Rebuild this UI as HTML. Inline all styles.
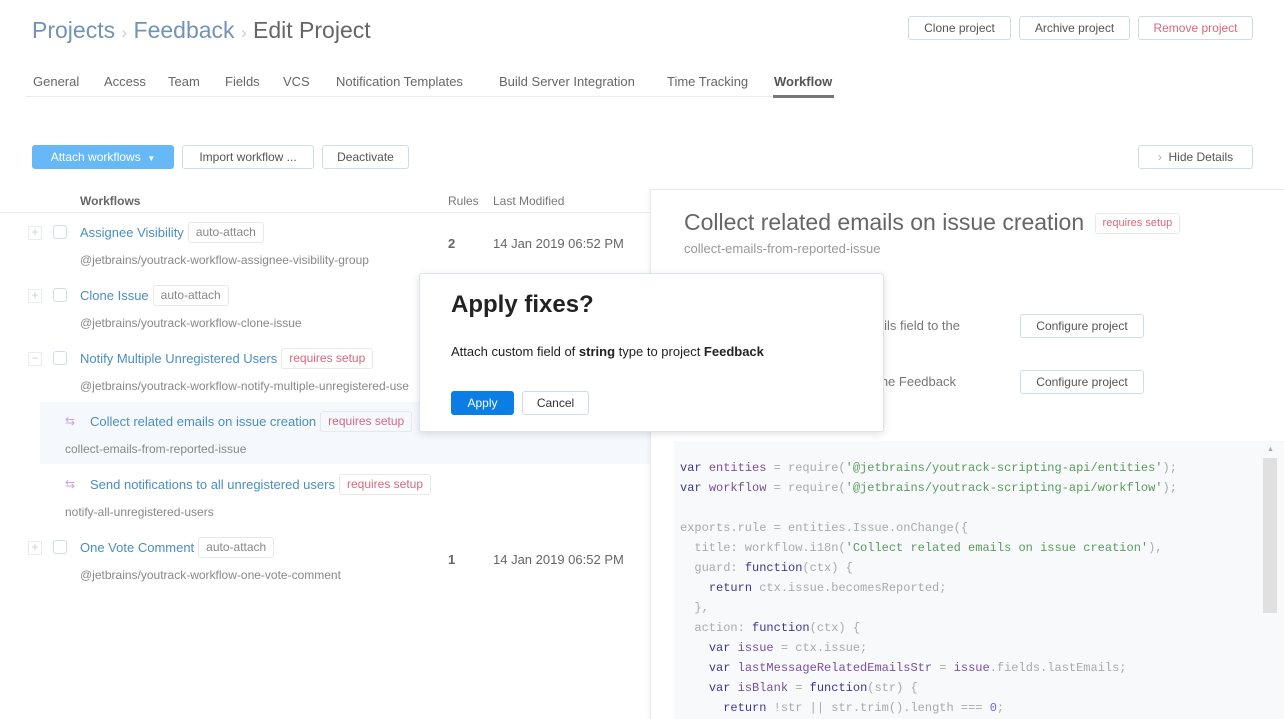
<!DOCTYPE html>
<html><head><meta charset="utf-8"><style>
*{box-sizing:border-box;margin:0;padding:0}
body{width:1284px;height:719px;overflow:hidden;background:#fff;font-family:"Liberation Sans","DejaVu Sans",sans-serif;font-size:13px;color:#444;position:relative}
.a{position:absolute;white-space:nowrap}
.btn{position:absolute;border:1px solid #cfdbe6;border-radius:3px;background:#fff;height:24px;line-height:22px;text-align:center;font-size:12px;color:#555}
.tag{display:inline-block;border:1px solid #e6e8ea;border-radius:3px;padding:0 7px;height:21px;line-height:19px;font-size:12px;color:#888;margin-left:4px;vertical-align:middle}
.tag.r{color:#d7687d}
.lnk{color:#4a8ec3;font-size:13px;vertical-align:middle}
.sub{color:#888;font-size:12px}
.cb{position:absolute;width:14px;height:14px;border:1px solid #cfdbe6;border-radius:3px;background:#fff}
.pl{position:absolute;width:14px;height:14px;border:1px solid #e8ecf0;color:#ccd;font-size:12px;line-height:11px;text-align:center}
.code{font-family:"Liberation Mono","DejaVu Sans Mono",monospace;font-size:12px;line-height:20px;color:#aaa}
.k{color:#3a3a8a}.v{color:#7a4f9c}.s{color:#5a9a5e}
</style></head><body>
<div class="a" style="left:32px;top:17px;font-size:23px;color:#7392b4">Projects <span style="color:#ccc;font-size:17px">›</span> Feedback <span style="color:#ccc;font-size:17px">›</span> <span style="color:#666">Edit Project</span></div>
<div class="btn" style="left:908px;top:16px;width:103px">Clone project</div>
<div class="btn" style="left:1019px;top:16px;width:111px">Archive project</div>
<div class="btn" style="left:1138px;top:16px;width:115px;color:#d7687d">Remove project</div>
<div class="a" style="left:33px;top:74px;font-size:13px;color:#666">
<span style="position:absolute;left:0">General</span><span style="position:absolute;left:71px">Access</span><span style="position:absolute;left:135px">Team</span><span style="position:absolute;left:192px">Fields</span><span style="position:absolute;left:250px">VCS</span><span style="position:absolute;left:303px">Notification Templates</span><span style="position:absolute;left:466px">Build Server Integration</span><span style="position:absolute;left:634px">Time Tracking</span><span style="position:absolute;left:741px;font-weight:bold;color:#555">Workflow</span></div>
<div class="a" style="left:26px;top:96px;width:808px;height:1px;background:#e6ebf0"></div>
<div class="a" style="left:773px;top:95px;width:61px;height:3px;background:#777"></div>
<div class="btn" style="left:32px;top:145px;width:142px;background:#66b8f7;border-color:#66b8f7;color:#fff">Attach workflows &nbsp;<span style="font-size:8px">▼</span></div>
<div class="btn" style="left:182px;top:145px;width:132px">Import workflow ...</div>
<div class="btn" style="left:322px;top:145px;width:87px">Deactivate</div>
<div class="btn" style="left:1138px;top:145px;width:115px"><span style="color:#aaa">›</span>&nbsp; Hide Details</div>
<div class="a" style="left:80px;top:194px;font-size:12px;font-weight:bold;color:#666">Workflows</div>
<div class="a" style="left:448px;top:194px;font-size:12px;color:#777">Rules</div>
<div class="a" style="left:493px;top:194px;font-size:12px;color:#777">Last Modified</div>
<div class="a" style="left:0;top:212px;width:650px;height:1px;background:#e6ebf0"></div>
<div class="a" style="left:40px;top:402px;width:610px;height:62px;background:#f5f8fc"></div>

<div class="pl" style="left:28px;top:226px">+</div><div class="cb" style="left:53px;top:225px"></div>
<div class="a" style="left:80px;top:222px"><span class="lnk">Assignee Visibility</span><span class="tag">auto-attach</span></div>
<div class="a sub" style="left:80px;top:253px">@jetbrains/youtrack-workflow-assignee-visibility-group</div>
<div class="a" style="left:448px;top:236px;font-weight:bold;color:#666">2</div>
<div class="a" style="left:493px;top:236px;color:#666">14 Jan 2019 06:52 PM</div>

<div class="pl" style="left:28px;top:289px">+</div><div class="cb" style="left:53px;top:288px"></div>
<div class="a" style="left:80px;top:285px"><span class="lnk">Clone Issue</span><span class="tag">auto-attach</span></div>
<div class="a sub" style="left:80px;top:316px">@jetbrains/youtrack-workflow-clone-issue</div>

<div class="pl" style="left:28px;top:352px">−</div><div class="cb" style="left:53px;top:351px"></div>
<div class="a" style="left:80px;top:348px"><span class="lnk">Notify Multiple Unregistered Users</span><span class="tag r">requires setup</span></div>
<div class="a sub" style="left:80px;top:379px">@jetbrains/youtrack-workflow-notify-multiple-unregistered-use</div>

<div class="a" style="left:65px;top:414px;color:#c9a4e6;font-size:12px">⇆</div>
<div class="a" style="left:90px;top:411px"><span class="lnk">Collect related emails on issue creation</span><span class="tag r">requires setup</span></div>
<div class="a sub" style="left:65px;top:442px">collect-emails-from-reported-issue</div>
<div class="a" style="left:65px;top:477px;color:#c9a4e6;font-size:12px">⇆</div>
<div class="a" style="left:90px;top:474px"><span class="lnk">Send notifications to all unregistered users</span><span class="tag r">requires setup</span></div>
<div class="a sub" style="left:65px;top:505px">notify-all-unregistered-users</div>

<div class="pl" style="left:28px;top:541px">+</div><div class="cb" style="left:53px;top:540px"></div>
<div class="a" style="left:80px;top:537px"><span class="lnk">One Vote Comment</span><span class="tag">auto-attach</span></div>
<div class="a sub" style="left:80px;top:568px">@jetbrains/youtrack-workflow-one-vote-comment</div>
<div class="a" style="left:448px;top:552px;font-weight:bold;color:#666">1</div>
<div class="a" style="left:493px;top:552px;color:#666">14 Jan 2019 06:52 PM</div>

<div class="a" style="left:650px;top:189px;width:634px;height:530px;border-left:1px solid #e6ebf0;border-top:1px solid #e6ebf0;box-shadow:-2px 0 4px rgba(0,0,0,.04)"></div>
<div class="a" style="left:684px;top:209px;font-size:23px;color:#666">Collect related emails on issue creation <span class="tag r" style="font-size:11px">requires setup</span></div>
<div class="a sub" style="left:684px;top:241px;font-size:13px;color:#999">collect-emails-from-reported-issue</div>
<div class="a" style="left:660px;top:318px;width:300px;text-align:right;color:#777">Add the lastEmails field to the</div>
<div class="a" style="left:660px;top:374px;width:296px;text-align:right;color:#777">Attach to the Feedback</div>
<div class="btn" style="left:1020px;top:314px;width:124px">Configure project</div>
<div class="btn" style="left:1020px;top:370px;width:124px">Configure project</div>

<div class="a" style="left:674px;top:441px;width:610px;height:278px;background:#f8f9fb"></div>
<div class="a" style="left:1263px;top:458px;width:14px;height:155px;background:#e0e0e0"></div>
<div class="a" style="left:1267px;top:446px;font-size:7px;color:#aaa">▲</div>
<div class="a code" style="left:680px;top:458px"><span class="k">var</span> <span class="v">entities</span> = require(<span class="s">'@jetbrains/youtrack-scripting-api/entities'</span>);<br><span class="k">var</span> <span class="v">workflow</span> = require(<span class="s">'@jetbrains/youtrack-scripting-api/workflow'</span>);<br><br>exports.rule = entities.Issue.onChange({<br>&nbsp;&nbsp;title: workflow.i18n(<span class="s">'Collect related emails on issue creation'</span>),<br>&nbsp;&nbsp;guard: <span class="k">function</span>(ctx) {<br>&nbsp;&nbsp;&nbsp;&nbsp;<span class="k">return</span> ctx.issue.becomesReported;<br>&nbsp;&nbsp;},<br>&nbsp;&nbsp;action: <span class="k">function</span>(ctx) {<br>&nbsp;&nbsp;&nbsp;&nbsp;<span class="k">var</span> <span class="v">issue</span> = ctx.issue;<br>&nbsp;&nbsp;&nbsp;&nbsp;<span class="k">var</span> <span class="v">lastMessageRelatedEmailsStr</span> = <span class="v">issue</span>.fields.lastEmails;<br>&nbsp;&nbsp;&nbsp;&nbsp;<span class="k">var</span> <span class="v">isBlank</span> = <span class="k">function</span>(str) {<br>&nbsp;&nbsp;&nbsp;&nbsp;&nbsp;&nbsp;<span class="k">return</span> !str || str.trim().length === <span style="color:#66f">0</span>;</div>

<div class="a" style="left:419px;top:273px;width:465px;height:159px;background:#fff;border:1px solid #dde3ea;border-radius:3px;box-shadow:0 2px 8px rgba(0,0,0,.12)"></div>
<div class="a" style="left:451px;top:291px;font-size:24px;font-weight:bold;color:#222">Apply fixes?</div>
<div class="a" style="left:451px;top:344px;font-size:13px;color:#222">Attach custom field of <b>string</b> type to project <b>Feedback</b></div>
<div class="btn" style="left:451px;top:391px;width:63px;background:#0a7ee5;border-color:#0a7ee5;color:#fff">Apply</div>
<div class="btn" style="left:522px;top:391px;width:67px;color:#333">Cancel</div>
</body></html>
